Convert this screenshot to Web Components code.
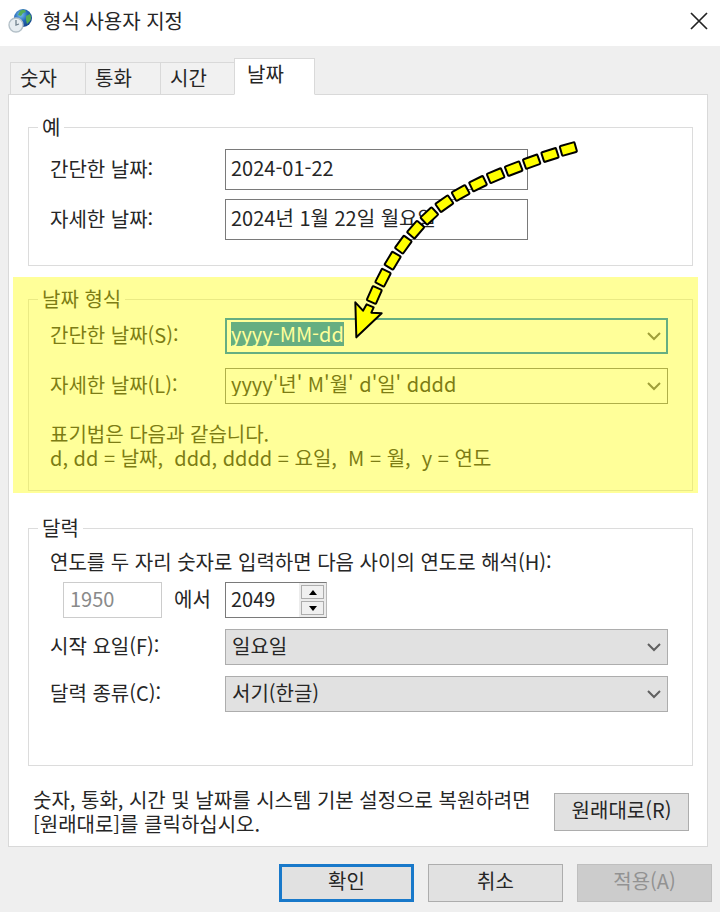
<!DOCTYPE html>
<html lang="ko">
<head>
<meta charset="utf-8">
<meta name="viewport" content="width=device-width, initial-scale=1">
<title>형식 사용자 지정</title>
<style>
    body {
        margin: 0;
        background: #efefef;
        color: #262626;
        font: 20px/24px "Noto Sans CJK KR", "Noto Sans", sans-serif;
    }
</style>
</head>
<body>
<format-dialog></format-dialog>

<script>
const controlStyle = `
    * { box-sizing: border-box; }
    button, input, select { font: inherit; color: inherit; margin: 0; border-radius: 0; outline: none; }
`;

const chevron = `
    <svg class="chevron" width="14" height="9" viewBox="0 0 14 9" fill="none" stroke="#606060" stroke-width="2" aria-hidden="true">
        <path d="M1 1 L7 7 L13 1"/>
    </svg>
`;

class TitleBar extends HTMLElement {
    connectedCallback() {
        this.attachShadow({ mode: 'open' }).innerHTML = `
            <style>
                ${controlStyle}
                :host { display: flex; align-items: center; height: 46px; padding: 0 12px 4px 8px; background: #fff; box-sizing: border-box; }
                h1 { flex: 1; margin: 0 0 0 9px; font: inherit; }
                button { display: flex; padding: 0; border: 0; background: none; }
            </style>
            <svg width="26" height="26" viewBox="0 0 26 26" aria-hidden="true">
                <defs>
                    <radialGradient id="globe" cx=".38" cy=".32" r=".75">
                        <stop offset="0" stop-color="#7cc4f0"/>
                        <stop offset=".5" stop-color="#2468b8"/>
                        <stop offset="1" stop-color="#123f86"/>
                    </radialGradient>
                </defs>
                <circle cx="15" cy="10" r="9" fill="url(#globe)"/>
                <path d="M12 3 Q15 1 17 2 L18 4 L15 5 L13 8 L10 7 Z M18 8 L22 6 Q24 10 22 13 L19 16 L18 12 Z" fill="#55ad56"/>
                <circle cx="8" cy="17" r="7" fill="#e6edf1" stroke="#b4c0c8" stroke-width="1.4"/>
                <path d="M8 12 V17 L11 16" fill="none" stroke="#71828e" stroke-width="1.3"/>
            </svg>
            <h1><slot></slot></h1>
            <button type="button" aria-label="닫기">
                <svg width="18" height="18" viewBox="0 0 18 18" stroke="#222" stroke-width="1.7"><path d="M1 1 L17 17 M17 1 L1 17"/></svg>
            </button>
        `;
    }
}

class TabStrip extends HTMLElement {
    connectedCallback() {
        const tabs = this.getAttribute('tabs').split(',');
        const active = this.getAttribute('active');
        this.attachShadow({ mode: 'open' }).innerHTML = `
            <style>
                ${controlStyle}
                :host { display: flex; align-items: flex-end; padding-left: 2px; margin-bottom: -1px; position: relative; }
                button { min-width: 75px; height: 33px; padding: 0 9px 2px; text-align: left; background: #f1f1f1; border: 1px solid #d9d9d9; border-right: 0; }
                button[aria-selected="true"] { min-width: 81px; height: 37px; padding: 0 12px 5px; margin-left: -1px; background: #fff; border-right: 1px solid #d9d9d9; border-bottom-color: #fff; }
            </style>
            ${tabs.map(t => `<button type="button" role="tab" aria-selected="${t === active}">${t}</button>`).join('')}
        `;
        this.setAttribute('role', 'tablist');
    }
}

class GroupBox extends HTMLElement {
    connectedCallback() {
        this.attachShadow({ mode: 'open' }).innerHTML = `
            <style>
                :host { display: block; position: relative; }
                fieldset { margin: 0; padding: 0 9px; border: 1px solid #dcdcdc; min-width: 0; }
                legend { padding: 0 4px; line-height: 22px; }
                .body { display: flex; flex-direction: column; gap: var(--row-gap, 9px); padding: var(--body-top, 11px) 15px var(--body-bottom, 25px) 12px; }
                .marker { display: none; }
                /* highlighter stroke over the whole group */
                :host([highlight]) .marker { display: block; position: absolute; inset: -11px -5px -2px -15px; background: rgba(255, 255, 0, 0.4); pointer-events: none; }
            </style>
            <fieldset>
                <legend>${this.getAttribute('label')}</legend>
                <div class="body"><slot></slot></div>
            </fieldset>
            <div class="marker"></div>
        `;
    }
}

class FieldRow extends HTMLElement {
    connectedCallback() {
        const value = this.getAttribute('value');
        const controls = {
            text: `<input id="control" class="sample" readonly value="${value}">`,
            combo: `<input id="control" value="${value}"><button type="button" aria-label="목록 열기">${chevron}</button>`,
            select: `<select id="control"><option>${value}</option></select>${chevron}`
        };
        const type = this.getAttribute('type');
        this.attachShadow({ mode: 'open' }).innerHTML = `
            <style>
                ${controlStyle}
                :host { display: grid; grid-template-columns: 175px 1fr; align-items: center; }
                label { padding-bottom: 2px; }
                .control { display: flex; align-items: center; position: relative; height: 36px; border: 1px solid #7a7a7a; }
                .control.text { width: 303px; max-width: 100%; height: 41px; }
                .control.select { background: #e1e1e1; border-color: #adadad; }
                :host([active]) .control { border: 2px solid #0078d7; }
                input { flex: 1; min-width: 0; height: 24px; padding: 0 5px; margin-bottom: 4px; border: 0; background: none; }
                :host([active]) input { padding: 0 4px; }
                input::selection { background: #0078d7; color: #fff; }
                .combo button { display: flex; padding: 0 6px; border: 0; background: none; }
                :host([active]) button { padding: 0 5px; }
                select { width: 100%; height: 100%; padding: 0 6px 2px; border: 0; background: none; appearance: none; }
                .select .chevron { position: absolute; right: 6px; pointer-events: none; }
            </style>
            <label for="control">${this.getAttribute('label')}</label>
            <div class="control ${type}">${controls[type]}</div>
        `;
        if (this.hasAttribute('active')) {
            const input = this.shadowRoot.querySelector('input');
            input.focus();
            input.select();
        }
    }
}

class YearRange extends HTMLElement {
    connectedCallback() {
        this.attachShadow({ mode: 'open' }).innerHTML = `
            <style>
                ${controlStyle}
                :host { display: block; }
                .caption { display: block; margin-bottom: 8px; }
                .range { display: grid; grid-template-columns: 162px 102px; padding-left: 13px; }
                .from { display: flex; align-items: center; gap: 12px; }
                .from span { padding-bottom: 2px; }
                input { min-width: 0; height: 36px; padding: 0 6px 4px; background: #fff; }
                .from input { width: 99px; border: 1px solid #cccccc; color: #8a8a8a; }
                .spin { display: flex; height: 36px; border: 1px solid #7a7a7a; border-right-color: #b8b8b8; }
                .spin input { flex: 1; height: 34px; padding: 0 5px 3px; border: 0; appearance: textfield; }
                input::-webkit-inner-spin-button { appearance: none; }
                .buttons { display: flex; flex-direction: column; gap: 2px; padding: 2px; width: 27px; background: #ececec; }
                .buttons button { flex: 1; display: flex; align-items: center; justify-content: center; padding: 0; border: 1px solid #adadad; background: #f0f0f0; }
            </style>
            <label class="caption" for="end">연도를 두 자리 숫자로 입력하면 다음 사이의 연도로 해석(H):</label>
            <div class="range">
                <div class="from"><input value="1950" aria-label="시작 연도" disabled><span>에서</span></div>
                <div class="spin">
                    <input id="end" type="number" value="2049">
                    <div class="buttons">
                        <button type="button" aria-label="증가"><svg width="8" height="5" viewBox="0 0 8 5"><path d="M0 5 L4 0 L8 5 Z"/></svg></button>
                        <button type="button" aria-label="감소"><svg width="8" height="5" viewBox="0 0 8 5"><path d="M0 0 L4 5 L8 0 Z"/></svg></button>
                    </div>
                </div>
            </div>
        `;
        const end = this.shadowRoot.getElementById('end');
        const [up, down] = this.shadowRoot.querySelectorAll('button');
        up.addEventListener('click', () => end.stepUp());
        down.addEventListener('click', () => end.stepDown());
    }
}

class PushButton extends HTMLElement {
    connectedCallback() {
        this.attachShadow({ mode: 'open' }).innerHTML = `
            <style>
                ${controlStyle}
                :host { display: block; flex: none; }
                button { display: block; width: 135px; height: 38px; padding: 0 0 4px; border: 1px solid #adadad; background: #e1e1e1; }
                :host([default]) button { border: 3px solid #1979ca; }
                button:disabled { border-color: #bfbfbf; background: #cccccc; color: #929292; }
            </style>
            <button type="button" ${this.hasAttribute('disabled') ? 'disabled' : ''}><slot></slot></button>
        `;
    }
}

class PointerArrow extends HTMLElement {
    connectedCallback() {
        // centre x, centre y, rotation of each dash
        const dashes = [
            [685, 87, -16], [630, 105, -18], [575, 125, -20], [521, 146, -21], [467, 167, -23],
            [414, 191, -26], [362, 219, -29], [313, 251, -35], [268, 288, -43], [227, 329, -49],
            [190, 374, -54], [158, 422, -59], [129, 473, -63], [103, 525, -66]
        ];
        this.attachShadow({ mode: 'open' }).innerHTML = `
            <style>
                :host { position: absolute; left: 340px; top: 120px; pointer-events: none; }
                svg { display: block; }
            </style>
            <svg width="240" height="220" viewBox="0 0 720 660" fill="#ffff00" stroke="#000" stroke-width="6" stroke-linejoin="round" aria-hidden="true">
                ${dashes.map(([x, y, r]) => `<rect x="-23" y="-15" width="46" height="30" rx="3" transform="translate(${x} ${y}) rotate(${r})"/>`).join('')}
                <path d="M46 547 L69 572 L80 553 L101 562 L94 578 L125 580 L49 652 Z"/>
            </svg>
        `;
    }
}

class FormatDialog extends HTMLElement {
    connectedCallback() {
        this.attachShadow({ mode: 'open' }).innerHTML = `
            <style>
                :host { display: block; position: relative; }
                main { padding: 12px 12px 0 8px; }
                .panel { display: flex; flex-direction: column; gap: 22px; padding: 21px 14px 10px 19px; background: #fff; border: 1px solid #d9d9d9; }
                .formats { --row-gap: 14px; --body-top: 8px; --body-bottom: 20px; }
                .calendar { --row-gap: 11px; --body-bottom: 53px; margin-top: 4px; }
                p { margin: 0; }
                .notation { padding-top: 4px; white-space: pre-wrap; }
                .restore { display: flex; align-items: center; justify-content: space-between; padding: 0 4px 0 5px; }
                footer { display: flex; justify-content: flex-end; gap: 14px; padding: 17px 8px 9px; }
            </style>
            <title-bar>형식 사용자 지정</title-bar>
            <main>
                <tab-strip tabs="숫자,통화,시간,날짜" active="날짜"></tab-strip>
                <div class="panel">
                    <group-box label="예">
                        <field-row type="text" label="간단한 날짜:" value="2024-01-22"></field-row>
                        <field-row type="text" label="자세한 날짜:" value="2024년 1월 22일 월요일"></field-row>
                    </group-box>
                    <group-box class="formats" label="날짜 형식" highlight>
                        <field-row type="combo" label="간단한 날짜(S):" value="yyyy-MM-dd" active></field-row>
                        <field-row type="combo" label="자세한 날짜(L):" value="yyyy'년' M'월' d'일' dddd"></field-row>
                        <p class="notation">표기법은 다음과 같습니다.
d, dd = 날짜,  ddd, dddd = 요일,  M = 월,  y = 연도</p>
                    </group-box>
                    <group-box class="calendar" label="달력">
                        <year-range></year-range>
                        <field-row type="select" label="시작 요일(F):" value="일요일"></field-row>
                        <field-row type="select" label="달력 종류(C):" value="서기(한글)"></field-row>
                    </group-box>
                    <div class="restore">
                        <p>숫자, 통화, 시간 및 날짜를 시스템 기본 설정으로 복원하려면<br>[원래대로]를 클릭하십시오.</p>
                        <push-button>원래대로(R)</push-button>
                    </div>
                </div>
            </main>
            <footer>
                <push-button default>확인</push-button>
                <push-button>취소</push-button>
                <push-button disabled>적용(A)</push-button>
            </footer>
            <pointer-arrow></pointer-arrow>
        `;
    }
}

customElements.define('title-bar', TitleBar);
customElements.define('tab-strip', TabStrip);
customElements.define('group-box', GroupBox);
customElements.define('field-row', FieldRow);
customElements.define('year-range', YearRange);
customElements.define('push-button', PushButton);
customElements.define('pointer-arrow', PointerArrow);
customElements.define('format-dialog', FormatDialog);
</script>
</body>
</html>
